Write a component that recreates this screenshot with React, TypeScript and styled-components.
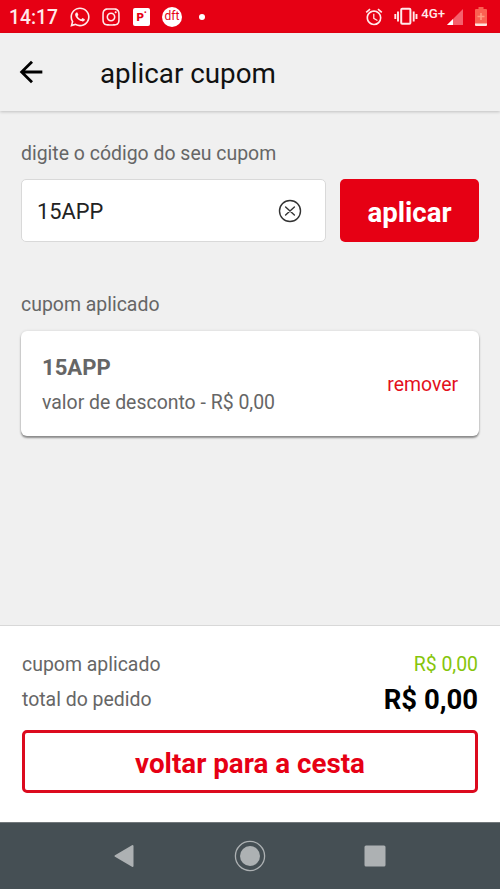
import React from 'react';
import styled, { createGlobalStyle } from 'styled-components';
import { FaWhatsapp, FaInstagram } from 'react-icons/fa';
import { MdAlarm, MdArrowBack } from 'react-icons/md';

const GlobalStyle = createGlobalStyle`
  *, *::before, *::after { box-sizing: border-box; }
  body {
    margin: 0;
    font-family: Roboto, sans-serif;
    background: #f0f0f0;
  }
  button, input { font-family: inherit; margin: 0; padding: 0; }
`;

const red = '#e60014';
const grey = '#666';

const Screen = styled.div`
  display: flex;
  flex-direction: column;
  width: 500px;
  height: 889px;
  overflow: hidden;
`;

const StatusBar = styled.div`
  display: flex;
  align-items: center;
  justify-content: space-between;
  flex: none;
  height: 33px;
  padding: 0 12px 0 9px;
  background: ${red};
  color: #fff;
  svg { display: block; flex: none; }
`;

const StatusGroup = styled.div`
  display: flex;
  align-items: center;
  height: 33px;
`;

const Clock = styled.span`
  width: 60px;
  padding-top: 2px;
  font-size: 19.3px;
  font-weight: 500;
  line-height: 33px;
  color: #ffe9ea;
`;

const StatusIcon = styled.span<{ $gap?: number }>`
  display: flex;
  margin-right: ${(p) => p.$gap ?? 0}px;
  color: #ffe9ea;
`;

const PayBadge = styled.span`
  display: flex;
  align-items: center;
  justify-content: center;
  width: 17px;
  height: 18px;
  margin-right: 12px;
  border-radius: 2px;
  background: #fff;
  color: ${red};
  font-size: 11.5px;
  font-weight: 900;
  line-height: 18px;
  sup {
    align-self: flex-start;
    font-size: 7px;
    line-height: 10px;
  }
`;

const DftBadge = styled.span`
  display: block;
  width: 20px;
  height: 20px;
  margin-right: 17px;
  border-radius: 50%;
  background: #fff;
  color: ${red};
  font-size: 12px;
  line-height: 19px;
  text-align: center;
`;

const Dot = styled.span`
  width: 6px;
  height: 6px;
  border-radius: 50%;
  background: #fff;
`;

const Network = styled.span`
  margin: 0 2px 6px 3px;
  font-size: 13.2px;
  font-weight: 500;
  line-height: 14px;
  color: #ffe9ea;
`;

const Header = styled.header`
  display: flex;
  align-items: center;
  flex: none;
  height: 78px;
  padding: 3px 0 0 14px;
  background: #f0f0f0;
  box-shadow: 0 1px 3px rgba(0, 0, 0, 0.2);
`;

const BackButton = styled.button`
  display: flex;
  width: 86px;
  height: 34px;
  margin-top: -3px;
  border: 0;
  background: none;
  color: #000;
`;

const Title = styled.h1`
  margin: 0;
  font-size: 27.8px;
  font-weight: 400;
  line-height: 36px;
  color: #111;
`;

const Content = styled.main`
  flex: 1;
  padding: 30px 21px 0;
`;

const Label = styled.h2`
  margin: 0;
  font-size: 19.45px;
  font-weight: 400;
  line-height: 26px;
  color: ${grey};
`;

const Form = styled.form`
  display: flex;
  gap: 14px;
  margin: 12px 0 50px;
`;

const Field = styled.div`
  display: flex;
  align-items: center;
  width: 305px;
  height: 63px;
  padding: 0 23px 0 15px;
  border: 1px solid #d9d9d9;
  border-radius: 5px;
  background: #fff;
`;

const CodeInput = styled.input`
  flex: 1;
  min-width: 0;
  height: 40px;
  padding-top: 1px;
  border: 0;
  outline: 0;
  background: none;
  font-size: 21.8px;
  color: #222;
`;

const ClearButton = styled.button`
  display: flex;
  border: 0;
  background: none;
  color: #333;
`;

const ApplyButton = styled.button`
  flex: 1;
  height: 63px;
  padding-top: 3px;
  border: 0;
  border-radius: 5px;
  background: ${red};
  color: #fff;
  font-size: 27.6px;
  font-weight: 700;
`;

const CouponCard = styled.section`
  display: flex;
  align-items: center;
  justify-content: space-between;
  height: 105px;
  margin-top: 13px;
  padding: 2px 21px 0;
  border-radius: 6px;
  background: #fff;
  box-shadow: 0 2px 2px rgba(0, 0, 0, 0.4), 0 0 3px rgba(0, 0, 0, 0.12);
`;

const CouponCode = styled.div`
  margin-bottom: 9px;
  font-size: 22.1px;
  font-weight: 700;
  line-height: 27px;
  color: ${grey};
`;

const Text = styled.div`
  font-size: 19.45px;
  line-height: 26px;
  color: ${grey};
`;

const RemoveButton = styled.button`
  border: 0;
  background: none;
  color: #e3101c;
  font-size: 19.4px;
  line-height: 26px;
`;

const Footer = styled.footer`
  flex: none;
  height: 197px;
  padding: 26px 22px 0;
  border-top: 1px solid #d8d8d8;
  background: #fff;
`;

const SummaryRow = styled.div`
  display: flex;
  align-items: center;
  justify-content: space-between;
  height: 26px;
  margin-bottom: 9px;
`;

const Discount = styled(Text)`
  color: #86c50a;
`;

const Total = styled.strong`
  font-size: 27.5px;
  font-weight: 700;
  line-height: 26px;
  color: #000;
`;

const BasketButton = styled.button`
  display: block;
  width: 456px;
  height: 63px;
  margin-top: 17px;
  padding-top: 3px;
  border: 3px solid #dc0a1e;
  border-radius: 5px;
  background: #fff;
  color: ${red};
  font-size: 27.75px;
  font-weight: 700;
`;

const NavBar = styled.nav`
  display: flex;
  align-items: center;
  justify-content: center;
  gap: 93px;
  flex: none;
  height: 67px;
  border-top: 1px solid #72787b;
  background: #454f54;
`;

const NavButton = styled.button`
  display: flex;
  width: 32px;
  height: 32px;
  border: 0;
  background: none;
`;

const VibrateIcon = () => (
  <svg width="24" height="19" viewBox="0 0 24 19" fill="none" stroke="#ffe9ea" strokeWidth="2">
    <rect x="7.2" y="1.8" width="9.2" height="15" rx="1" />
    <path d="M4 4.500v10M19.700 4.500v10M1.300 7v5M22.500 7v5" strokeWidth="1.900" />
  </svg>
);

const SignalIcon = () => (
  <svg width="17" height="17" viewBox="0 0 17 17">
    <path d="M0 17L16 1V17z" fill="#f5606c" />
    <path d="M0 17L6 11V17z" fill="#fff" />
  </svg>
);

const BatteryIcon = () => (
  <svg width="13" height="20" viewBox="0 0 13 20">
    <path d="M3.500 0h5v2H11a1 1 0 0 1 1 1v14H0V3a1 1 0 0 1 1-1h2.500z" fill="#fb6052" />
    <path d="M0 16.500h12V18a1 1 0 0 1-1 1H1a1 1 0 0 1-1-1z" fill="#ffe4df" />
    <path d="M6 6v7M2.500 9.500h7" stroke="#ff9a80" strokeWidth="1.600" />
  </svg>
);

const ClearIcon = () => (
  <svg width="24" height="24" viewBox="0 0 24 24" fill="none" stroke="currentColor" strokeWidth="1.400" strokeLinecap="round">
    <circle cx="12" cy="12" r="10.500" />
    <path d="M7.600 8l8.800 8M16.400 8l-8.800 8" />
  </svg>
);

export default function App() {
  return (
    <>
      <GlobalStyle />
      <Screen>
        <StatusBar>
          <StatusGroup>
            <Clock>14:17</Clock>
            <StatusIcon $gap={10}><FaWhatsapp size={22} /></StatusIcon>
            <StatusIcon $gap={12}><FaInstagram size={20} /></StatusIcon>
            <PayBadge>P<sup>•</sup></PayBadge>
            <DftBadge>dft</DftBadge>
            <Dot />
          </StatusGroup>
          <StatusGroup>
            <StatusIcon $gap={10}><MdAlarm size={20} /></StatusIcon>
            <StatusIcon><VibrateIcon /></StatusIcon>
            <Network>4G+</Network>
            <StatusIcon $gap={11}><SignalIcon /></StatusIcon>
            <BatteryIcon />
          </StatusGroup>
        </StatusBar>
        <Header>
          <BackButton aria-label="voltar"><MdArrowBack size={34} /></BackButton>
          <Title>aplicar cupom</Title>
        </Header>
        <Content>
          <Label>digite o código do seu cupom</Label>
          <Form onSubmit={(e) => e.preventDefault()}>
            <Field>
              <CodeInput defaultValue="15APP" aria-label="cupom" />
              <ClearButton type="button" aria-label="limpar"><ClearIcon /></ClearButton>
            </Field>
            <ApplyButton>aplicar</ApplyButton>
          </Form>
          <Label>cupom aplicado</Label>
          <CouponCard>
            <div>
              <CouponCode>15APP</CouponCode>
              <Text>valor de desconto - R$ 0,00</Text>
            </div>
            <RemoveButton>remover</RemoveButton>
          </CouponCard>
        </Content>
        <Footer>
          <SummaryRow>
            <Text>cupom aplicado</Text>
            <Discount>R$ 0,00</Discount>
          </SummaryRow>
          <SummaryRow>
            <Text>total do pedido</Text>
            <Total>R$ 0,00</Total>
          </SummaryRow>
          <BasketButton>voltar para a cesta</BasketButton>
        </Footer>
        <NavBar>
          <NavButton aria-label="anterior">
            <svg width="32" height="32" viewBox="0 0 32 32">
              <path d="M6.500 16L23.500 6V26z" fill="#adb1b3" stroke="#adb1b3" strokeWidth="2" strokeLinejoin="round" />
            </svg>
          </NavButton>
          <NavButton aria-label="início">
            <svg width="32" height="32" viewBox="0 0 32 32">
              <circle cx="16" cy="16" r="14.600" fill="none" stroke="#adb1b3" strokeWidth="1.300" />
              <circle cx="16" cy="16" r="10" fill="#adb1b3" />
            </svg>
          </NavButton>
          <NavButton aria-label="recentes">
            <svg width="32" height="32" viewBox="0 0 32 32">
              <rect x="5.500" y="5.500" width="21" height="21" rx="1.500" fill="#adb1b3" />
            </svg>
          </NavButton>
        </NavBar>
      </Screen>
    </>
  );
}
